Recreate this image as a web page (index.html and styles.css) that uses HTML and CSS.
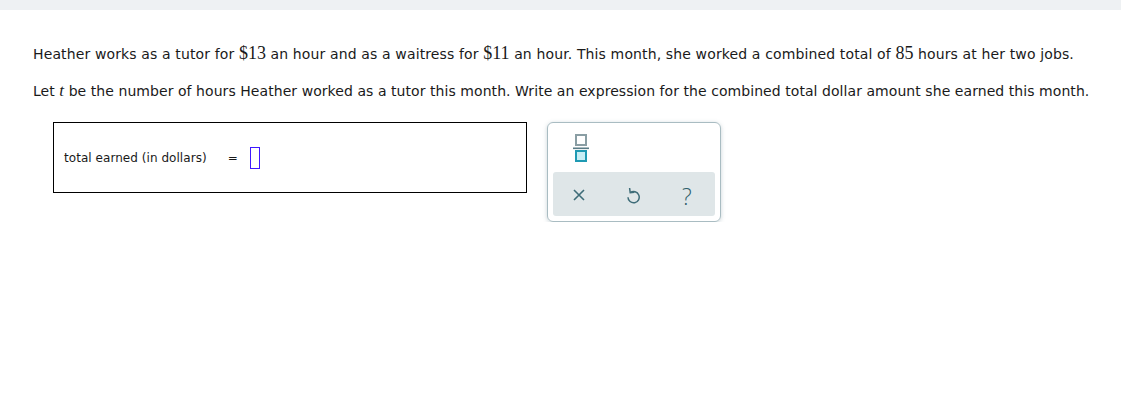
FILE: index.html
```html
<!DOCTYPE html>
<html>
<head>
<meta charset="utf-8">
<link rel="stylesheet" href="styles.css">
</head>
<body>
<div class="topbar"></div>
<div class="content">
  <p class="line l1">Heather works as a tutor for <span class="num">$13</span> an hour and as a waitress for <span class="num">$11</span> an hour. This month, she worked a combined total of <span class="num">85</span> hours at her two jobs.</p>
  <p class="line l2">Let <i class="var">t</i> be the number of hours Heather worked as a tutor this month. Write an expression for the combined total dollar amount she earned this month.</p>
  <div class="answer-row">
    <div class="answer-box">
      <span class="label">total earned (in dollars)</span>
      <span class="eq">=</span>
      <span class="input"></span>
    </div>
    <div class="palette">
      <div class="palette-top">
        <svg class="frac" width="16" height="28" viewBox="0 0 16 28">
          <rect x="3" y="1" width="10" height="10" fill="#fff" stroke="#8a9ea4" stroke-width="2"/>
          <rect x="0" y="13.5" width="16" height="1.6" fill="#5a7c86"/>
          <rect x="3" y="17" width="10" height="10" fill="#c8eef5" stroke="#1f9ab3" stroke-width="2"/>
        </svg>
      </div>
      <div class="palette-bottom">
        <svg class="ico" width="14" height="14" viewBox="0 0 14 14">
          <path d="M2 2 L12 12 M12 2 L2 12" stroke="#3e6c78" stroke-width="1.6" fill="none"/>
        </svg>
        <svg class="ico undo" width="15" height="17" viewBox="0 0 15 17">
          <path d="M4.4 5.6 A5.6 5.6 0 1 1 2 10.2" stroke="#3e6c78" stroke-width="1.5" fill="none"/>
          <path d="M3.6 1 L4.2 5.6 L8.4 5.2" stroke="#3e6c78" stroke-width="1.5" fill="none"/>
        </svg>
        <span class="q">?</span>
      </div>
    </div>
  </div>
</div>
</body>
</html>
```
FILE: styles.css
```css
html, body {
  margin: 0;
  padding: 0;
  background: #fff;
}
body {
  font-family: "DejaVu Sans", Verdana, sans-serif;
  color: #1a1a1a;
}
.topbar {
  height: 10px;
  background: #eef1f3;
}
.content {
  padding: 0 0 0 33px;
}
.line {
  margin: 0;
  font-size: 14px;
  letter-spacing: 0.06px;
  line-height: 20px;
  white-space: nowrap;
}
.l1 {
  padding-top: 33px;
  letter-spacing: 0.13px;
}
.l2 {
  padding-top: 17px;
}
.num {
  font-family: "Liberation Serif", "Times New Roman", serif;
  font-size: 18px;
  letter-spacing: 0;
}
.var {
  font-family: "Liberation Serif", "Times New Roman", serif;
  font-size: 17px;
}
.answer-row {
  display: flex;
  align-items: flex-start;
  gap: 20px;
  margin-top: 21px;
  margin-left: 20px;
}
.answer-box {
  box-sizing: border-box;
  width: 474px;
  height: 71px;
  border: 1px solid #000;
  display: flex;
  align-items: center;
  padding-left: 10px;
  padding-top: 1px;
}
.label {
  font-size: 12px;
  letter-spacing: 0.05px;
}
.eq {
  font-size: 12px;
  margin-left: 21px;
}
.input {
  box-sizing: border-box;
  width: 10px;
  height: 22px;
  border: 1px solid #3f19ff;
  margin-left: 12px;
}
.palette {
  box-sizing: border-box;
  width: 174px;
  height: 100px;
  border: 1px solid #a9bcc2;
  border-radius: 6px;
  box-shadow: 0 1px 4px rgba(100, 130, 140, 0.35);
  padding: 0 5px 5px 5px;
  display: flex;
  flex-direction: column;
}
.palette-top {
  height: 49px;
  display: flex;
  align-items: center;
  padding-left: 20px;
  padding-top: 1px;
  box-sizing: border-box;
}
.palette-bottom {
  flex: 1;
  background: #dfe6e8;
  border-radius: 3px;
  display: flex;
  align-items: center;
  padding-left: 19px;
  gap: 0;
}
.ico {
  display: block;
}
.palette-bottom .ico:first-child {
  margin-right: 40px;
  margin-top: 2px;
}
.palette-bottom .undo {
  margin-right: 41px;
  margin-top: 2px;
}
.q {
  font-family: "Open Sans", "DejaVu Sans", sans-serif;
  font-weight: 300;
  font-size: 23px;
  color: #2f5f6c;
  line-height: 20px;
  margin-top: 3px;
}
```
